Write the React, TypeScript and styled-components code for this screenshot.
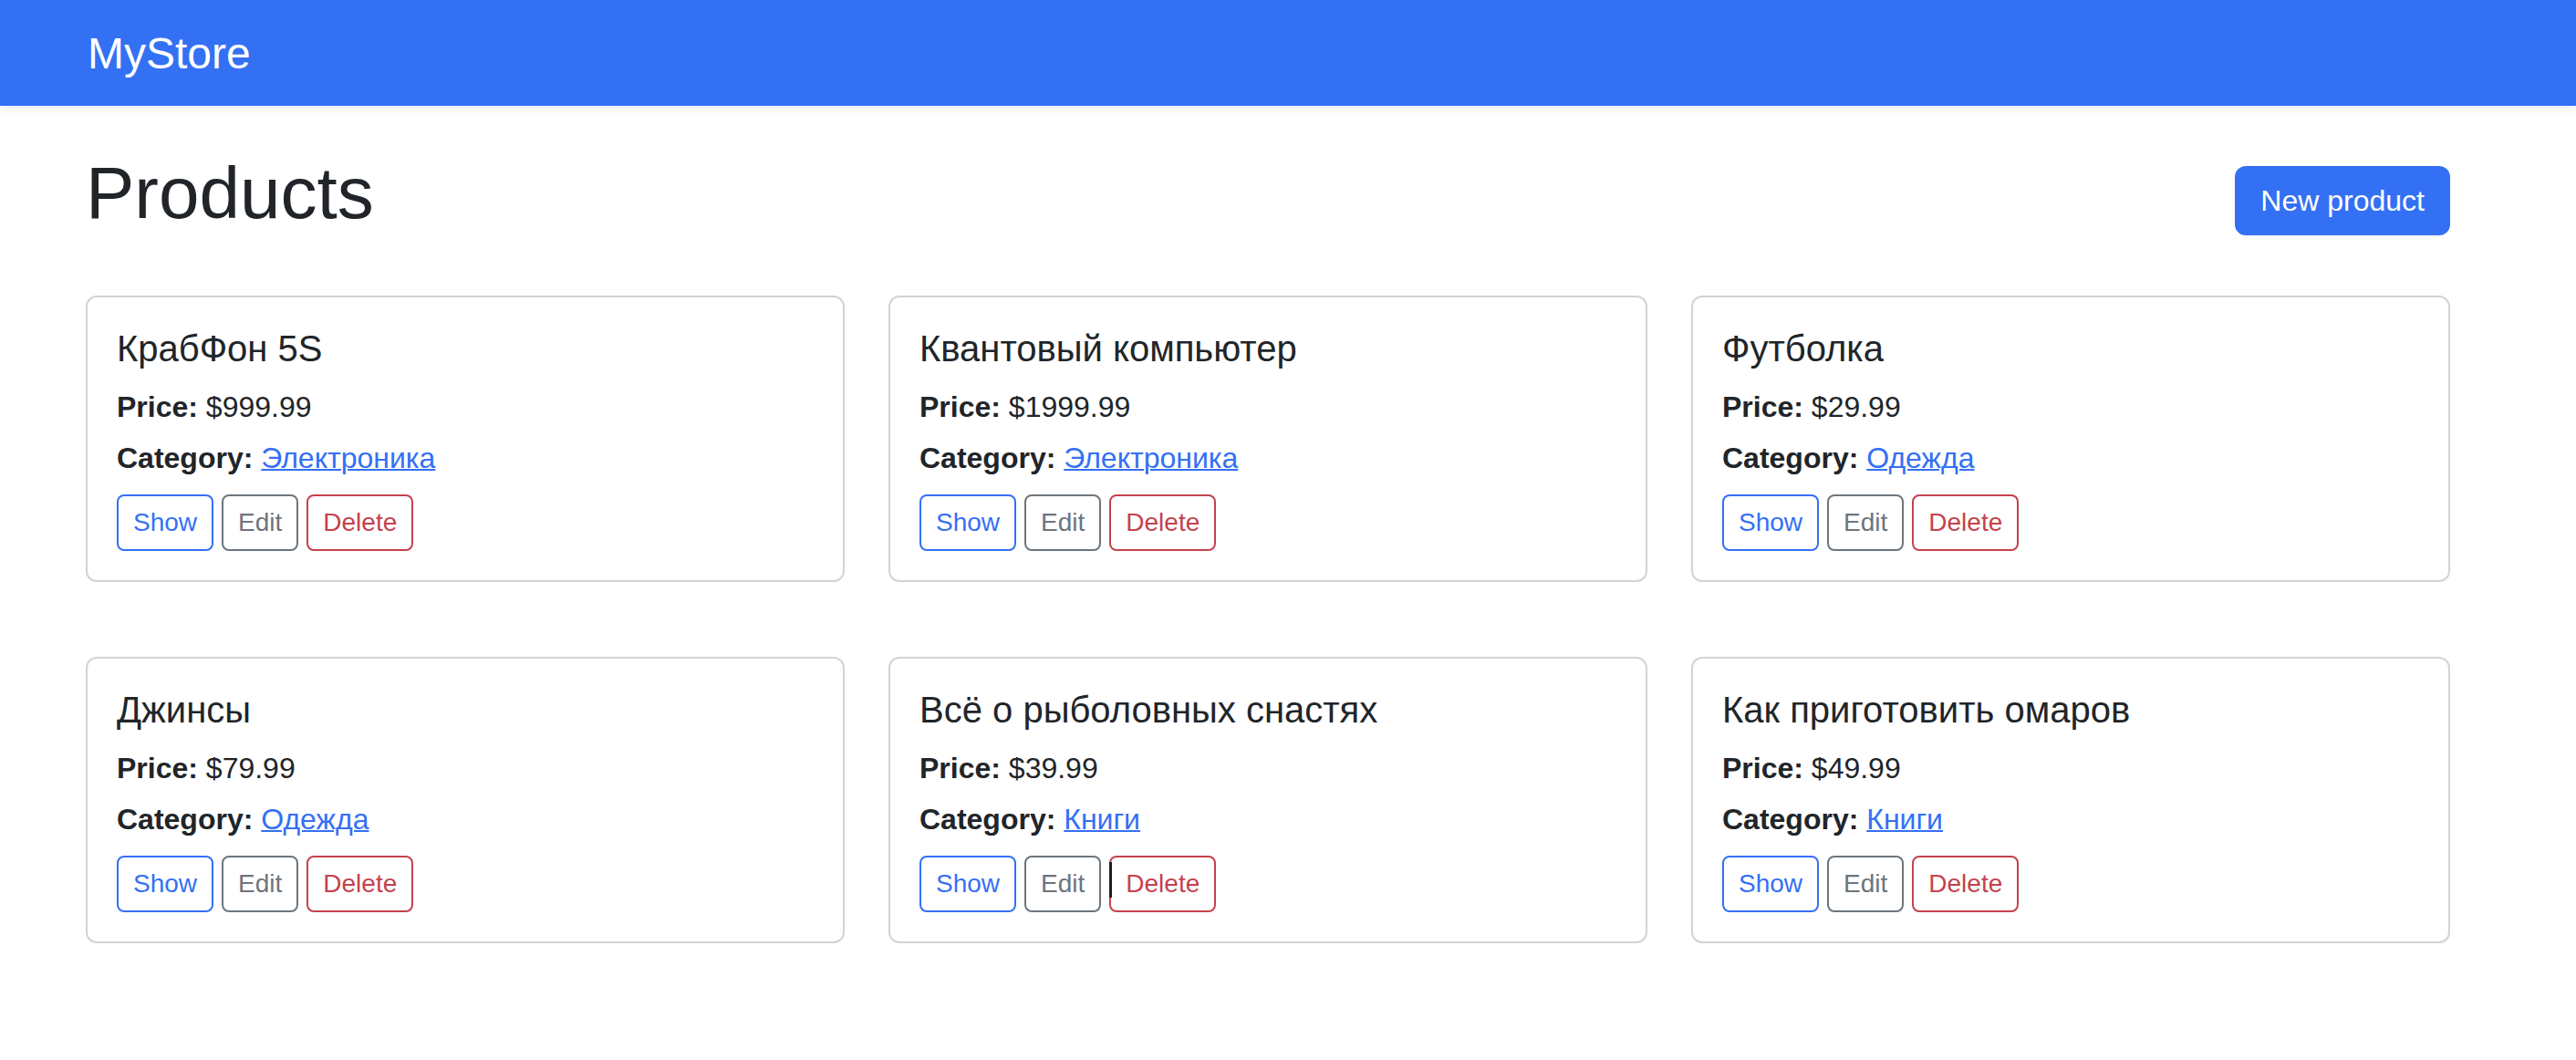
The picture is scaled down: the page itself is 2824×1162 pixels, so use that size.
import styled, { createGlobalStyle } from "styled-components";

const GlobalStyle = createGlobalStyle`
  body {
    margin: 0;
    background: #fff;
    color: #212529;
    font-family: "Liberation Sans", Arial, sans-serif;
  }
`;

const Navbar = styled.nav`
  height: 116px;
  display: flex;
  align-items: center;
  padding-left: 96px;
  background: #3470f4;
  box-shadow: 0 4px 10px rgba(0, 0, 0, 0.07);
`;

const Brand = styled.a`
  color: #fff;
  font-size: 48px;
  text-decoration: none;
`;

const Main = styled.main`
  width: 2592px;
  margin-left: 94px;
  padding-top: 48px;
`;

const TopRow = styled.div`
  display: flex;
  justify-content: space-between;
  align-items: center;
`;

const Title = styled.h1`
  margin: 0 0 16px;
  font-size: 80px;
  line-height: 96px;
  font-weight: 500;
`;

const NewButton = styled.button`
  height: 76px;
  padding: 0 28px;
  border: none;
  border-radius: 12px;
  background: #3470f4;
  color: #fff;
  font-family: inherit;
  font-size: 32px;
`;

const Grid = styled.div`
  margin-top: 48px;
  display: grid;
  grid-template-columns: repeat(3, 1fr);
  column-gap: 48px;
  row-gap: 82px;
`;

const Card = styled.div`
  border: 2px solid #d3d3d3;
  border-radius: 12px;
  padding: 32px;
`;

const CardTitle = styled.h5`
  margin: 0 0 16px;
  font-size: 40px;
  line-height: 48px;
  font-weight: 500;
`;

const Info = styled.p<{ $last?: boolean }>`
  margin: 0 0 ${(p) => (p.$last ? "16px" : "8px")};
  font-size: 32px;
  line-height: 48px;
  > a {
    color: #3470f4;
    text-decoration-thickness: 2px;
  }
`;

const Actions = styled.div`
  display: flex;
  gap: 9px;
`;

const colors = {
  primary: "#3470f4",
  secondary: "#6c757d",
  danger: "#c4424d",
};

const ActionButton = styled.button<{ $variant: keyof typeof colors; $caret?: boolean }>`
  position: relative;
  height: 62px;
  padding: 0 16px;
  background: #fff;
  border: 2px solid ${(p) => colors[p.$variant]};
  border-radius: 8px;
  color: ${(p) => colors[p.$variant]};
  font-family: inherit;
  font-size: 28px;
  &::before {
    content: "";
    display: ${(p) => (p.$caret ? "block" : "none")};
    position: absolute;
    left: -2px;
    top: 5px;
    width: 3px;
    height: 39px;
    background: #1d1f22;
  }
`;

const products = [
  { id: 1, name: "КрабФон 5S", price: "999.99", category: "Электроника" },
  { id: 2, name: "Квантовый компьютер", price: "1999.99", category: "Электроника" },
  { id: 3, name: "Футболка", price: "29.99", category: "Одежда" },
  { id: 4, name: "Джинсы", price: "79.99", category: "Одежда" },
  { id: 5, name: "Всё о рыболовных снастях", price: "39.99", category: "Книги" },
  { id: 6, name: "Как приготовить омаров", price: "49.99", category: "Книги" },
];

const App = function () {
  return (
    <div>
      <GlobalStyle />
      <Navbar>
        <Brand href="#">MyStore</Brand>
      </Navbar>
      <Main>
        <TopRow>
          <Title>Products</Title>
          <NewButton>New product</NewButton>
        </TopRow>
        <Grid>
          {products.map((item) => (
            <Card key={item.id}>
              <CardTitle>{item.name}</CardTitle>
              <Info>
                <strong>Price:</strong> ${item.price}
              </Info>
              <Info $last>
                <strong>Category:</strong> <a href="#">{item.category}</a>
              </Info>
              <Actions>
                <ActionButton $variant="primary">Show</ActionButton>
                <ActionButton $variant="secondary">Edit</ActionButton>
                {/* the caret line in the screenshot sits on this one */}
                <ActionButton $variant="danger" $caret={item.id === 5}>
                  Delete
                </ActionButton>
              </Actions>
            </Card>
          ))}
        </Grid>
      </Main>
    </div>
  );
};

export default App;
